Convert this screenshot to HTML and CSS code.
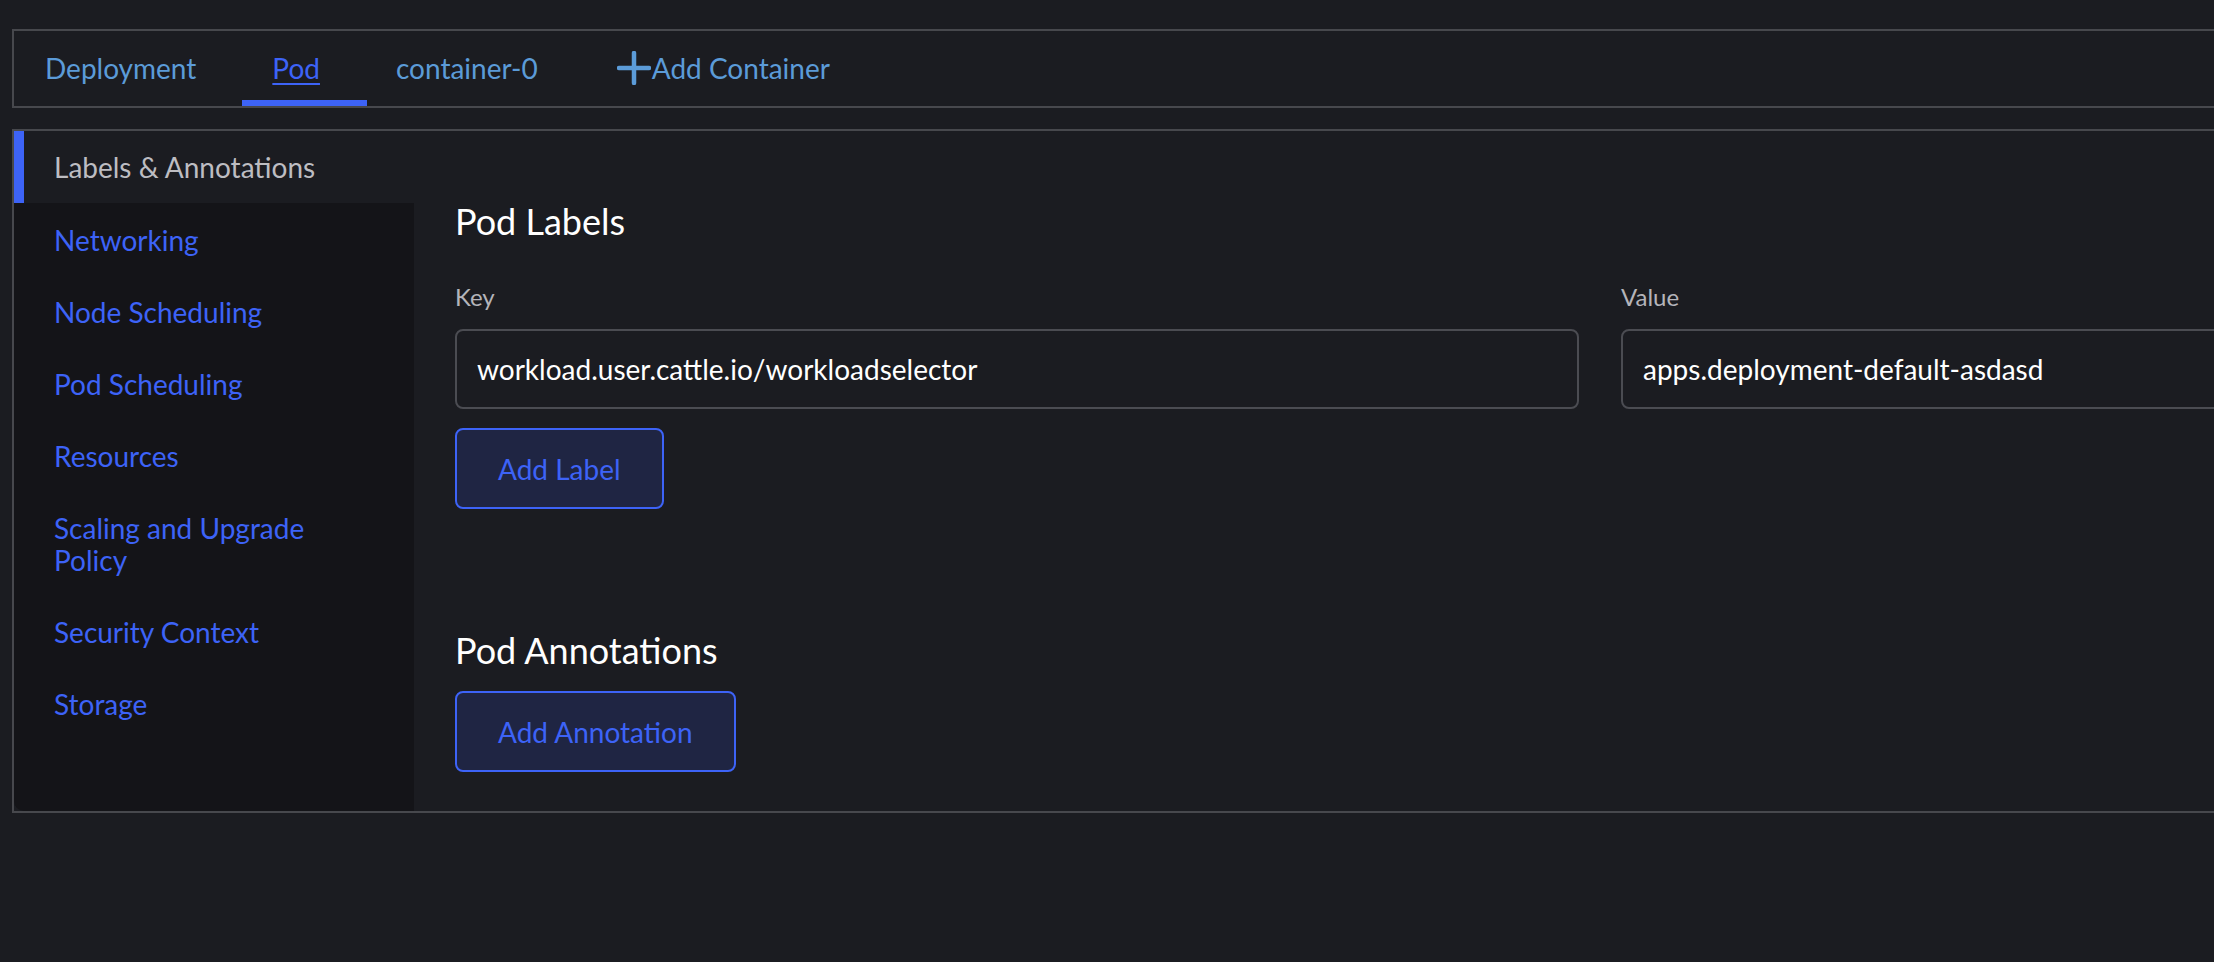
FILE: index.html
```html
<!DOCTYPE html>
<html>
<head>
  <title>Pod - Labels &amp; Annotations</title>
  <meta charset="utf-8">
  <link rel="stylesheet" href="styles.css">
</head>
<body>
<div class="page">
  <div class="tabs">
    <a class="tab">Deployment</a>
    <a class="tab active"><span>Pod</span></a>
    <a class="tab">container-0</a>
    <a class="tab add">
      <svg class="plus" viewBox="0 0 34 34" width="34" height="34">
        <path d="M17 2 V32 M2 17 H32" stroke="currentColor" stroke-width="4.5" stroke-linecap="round" fill="none"/>
      </svg>Add Container
    </a>
  </div>

  <div class="panel">
    <ul class="side-nav">
      <li class="active">Labels &amp; Annotations</li>
      <li>Networking</li>
      <li>Node Scheduling</li>
      <li>Pod Scheduling</li>
      <li>Resources</li>
      <li>Scaling and Upgrade<br>Policy</li>
      <li>Security Context</li>
      <li>Storage</li>
    </ul>

    <div class="main">
      <h3>Pod Labels</h3>
      <div class="kv-row">
        <div class="field">
          <label>Key</label>
          <input type="text" value="workload.user.cattle.io/workloadselector">
        </div>
        <div class="field">
          <label>Value</label>
          <input type="text" value="apps.deployment-default-asdasd">
        </div>
      </div>
      <button class="btn">Add Label</button>

      <h3 class="second">Pod Annotations</h3>
      <button class="btn">Add Annotation</button>
    </div>
  </div>
</div>
</body>
</html>
```

FILE: styles.css
```css
html, body {
  margin: 0;
  padding: 0;
  background: #1b1c21;
  overflow: hidden;
}
body {
  font-family: Lato, 'Noto Sans', Arial, sans-serif;
  font-size: 28px;
  color: #fff;
}
.page {
  width: 2776px;
  padding: 29px 0 0 12px;
}

/* 상단 탭 */
.tabs {
  display: flex;
  align-items: stretch;
  gap: 76px;
  height: 75px;
  border: 2px solid #47484d;
  padding-left: 31px;
}
.tab {
  display: flex;
  align-items: center;
  color: #5b9bd8;
  line-height: 32px;
  padding-bottom: 2px;
  cursor: pointer;
}
.tab.active {
  color: #3d63f7;
  padding: 0 47px 0 30px;
  margin: 0 -47px 0 -30px;
  border-bottom: 6px solid #3d63f7;
  box-sizing: border-box;
}
.tab.active span {
  text-decoration: underline;
  text-underline-offset: 4px;
  text-decoration-thickness: 2px;
  padding-top: 4px;
}
.tab.add {
  margin-left: 3px;
}
.tab.add .plus {
  margin-right: 1px;
}

/* 본문 패널 */
.panel {
  display: flex;
  margin-top: 21px;
  border: 2px solid #47484d;
}
.side-nav {
  list-style: none;
  margin: 0;
  padding: 0 0 70px 0;
  width: 400px;
  flex-shrink: 0;
  background: #141418;
  border-bottom-left-radius: 10px;
}
.side-nav li {
  color: #3d63f7;
  line-height: 32px;
  padding: 21px 20px 19px 40px;
  cursor: pointer;
}
.side-nav li.active {
  color: #bdbdc2;
  background: #1b1c21;
  border-left: 10px solid #3d63f7;
  padding: 20px 20px 20px 30px;
}

.main {
  flex: 1;
  padding: 68px 41px 39px 41px;
}
h3 {
  margin: 0;
  font-size: 36px;
  font-weight: normal;
  line-height: 44px;
  color: #fff;
}
h3.second {
  margin-top: 119px;
}
.kv-row {
  display: grid;
  grid-template-columns: 1fr 1fr;
  gap: 42px;
  margin-top: 38px;
}
.field label {
  display: block;
  font-size: 24px;
  line-height: 32px;
  color: #b4b4ba;
  margin-bottom: 16px;
}
.field input {
  display: block;
  width: 100%;
  box-sizing: border-box;
  height: 80px;
  padding: 0 20px;
  background: #1b1c21;
  border: 2px solid #4b4c52;
  border-radius: 8px;
  font-family: inherit;
  font-size: 28px;
  color: #fff;
  outline: none;
}
.btn {
  display: block;
  margin-top: 19px;
  height: 81px;
  padding: 0 41px;
  background: #1f2543;
  border: 2px solid #3d63f7;
  border-radius: 8px;
  color: #3d63f7;
  font-family: inherit;
  font-size: 28px;
  cursor: pointer;
}
```
